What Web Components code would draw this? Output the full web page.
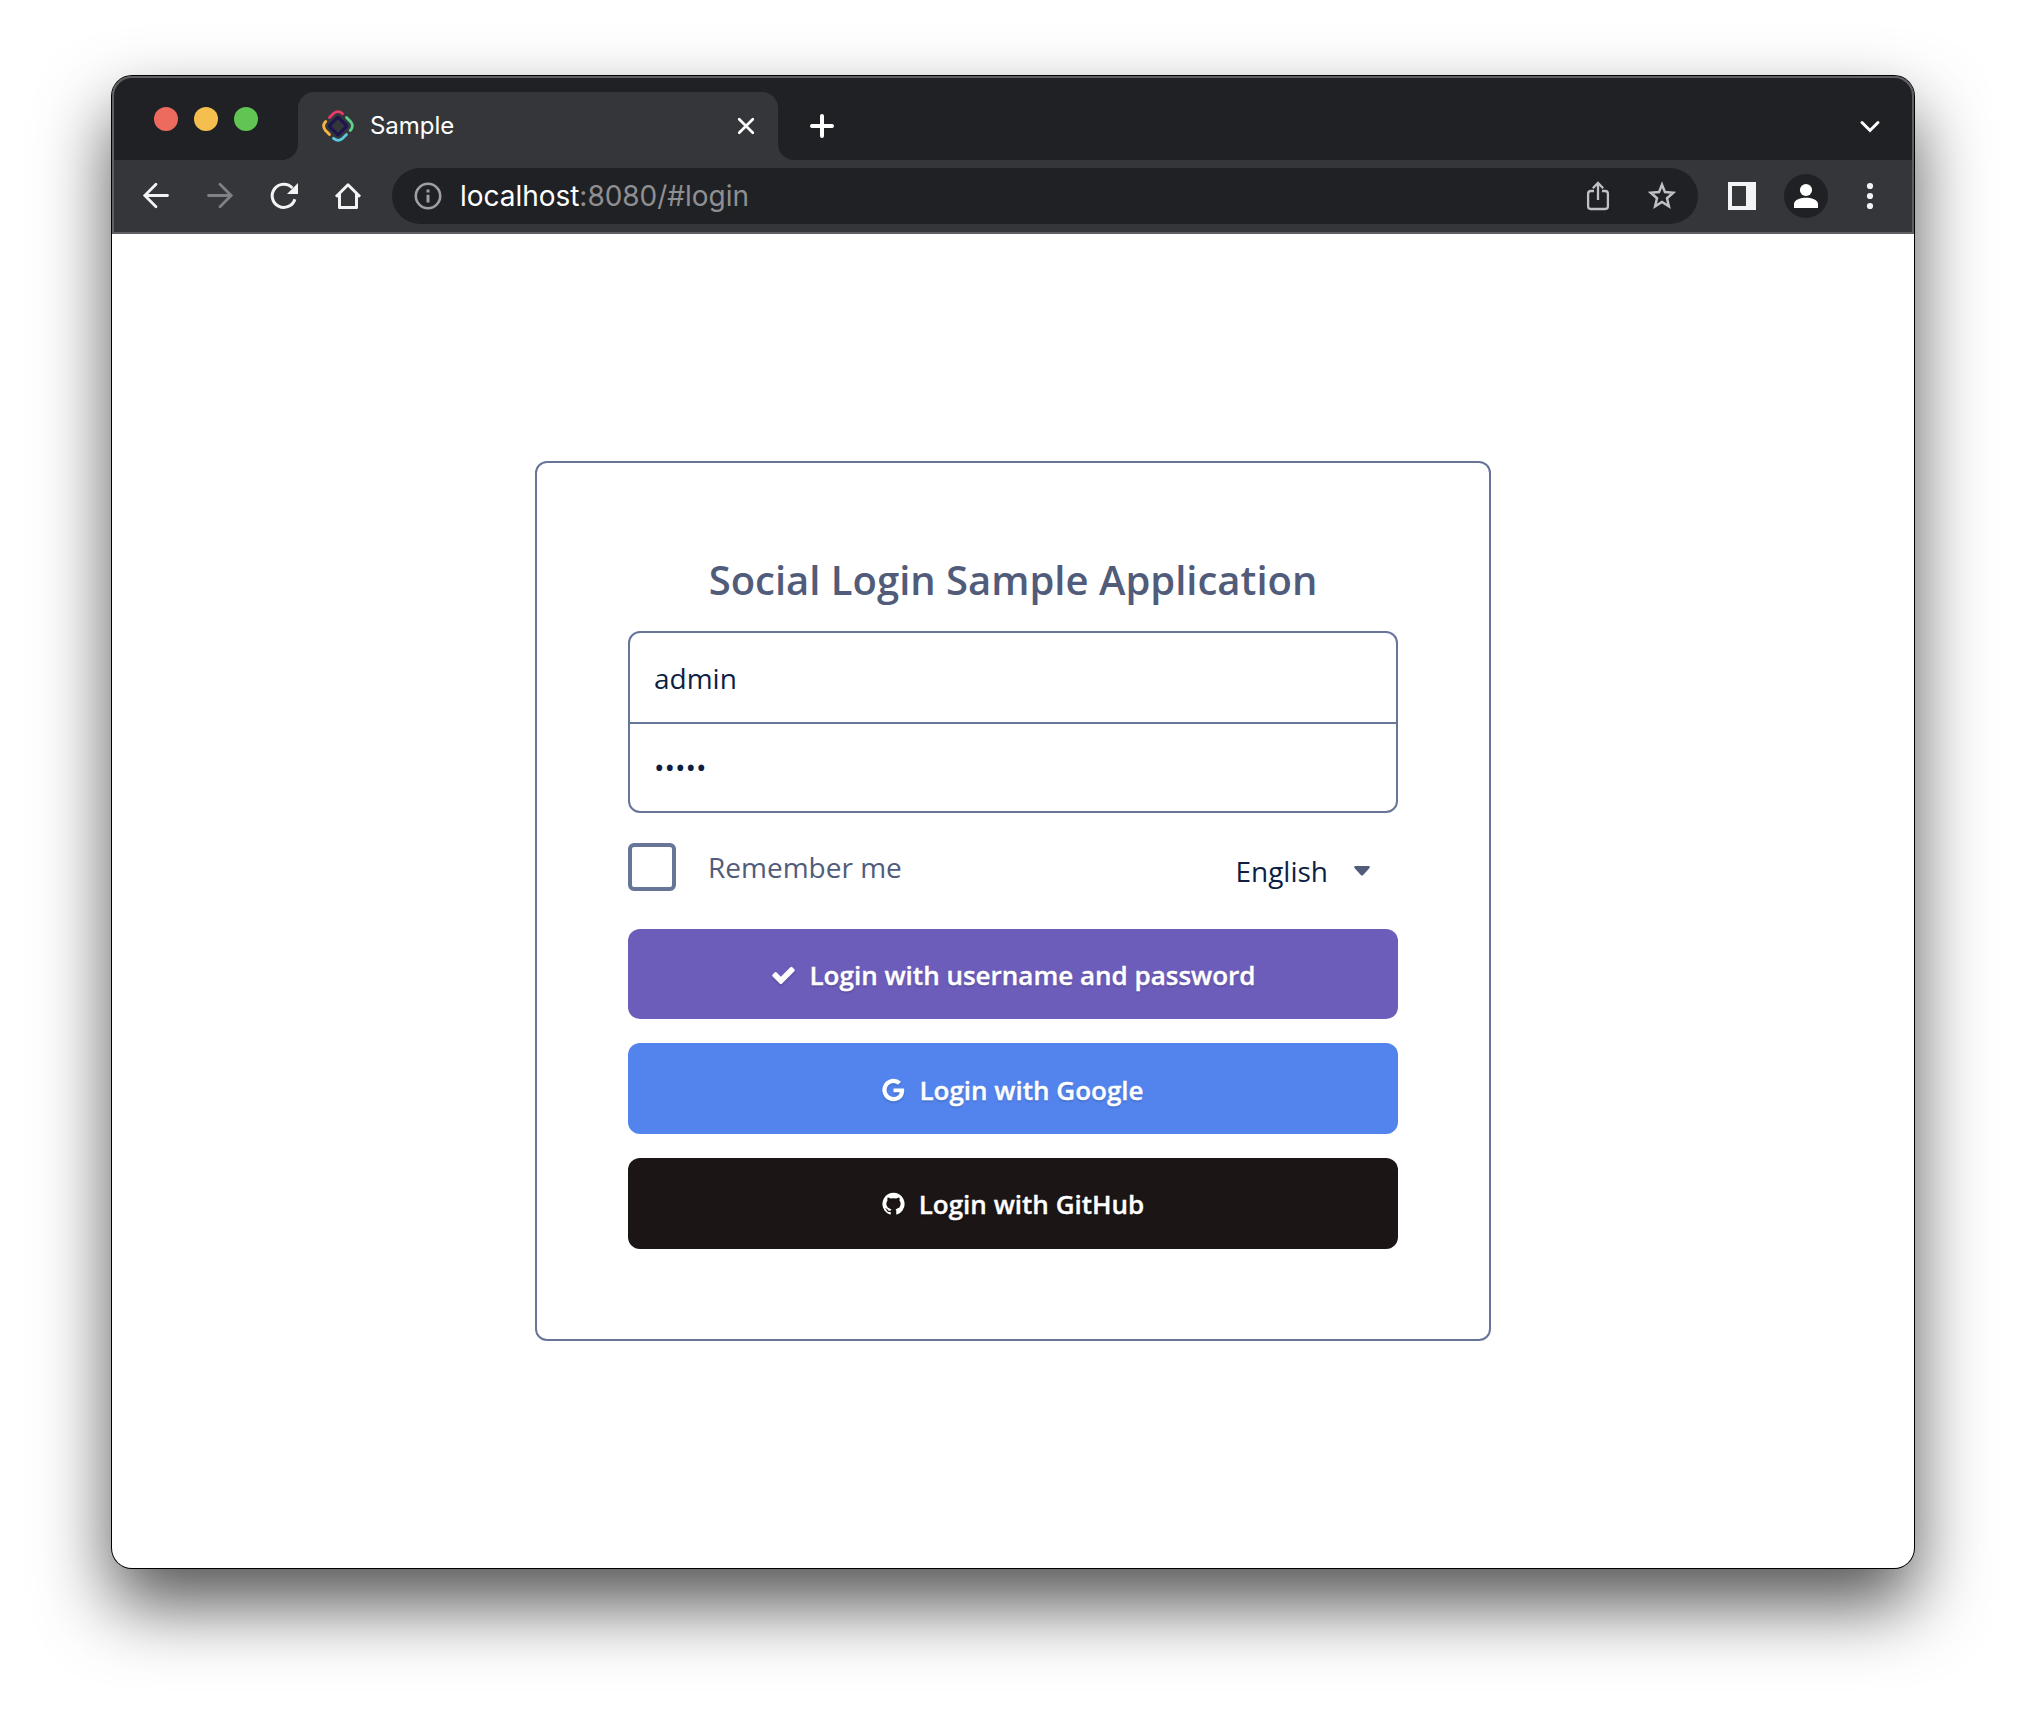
<!DOCTYPE html>
<html lang="en">
<head>
<meta charset="utf-8">
<title>Sample</title>
<style>
  html, body { margin: 0; background: #fff; }
  body { font-family: "Open Sans", sans-serif; height: 1716px; overflow: hidden; }
</style>
</head>
<body>
<app-window>
  <tab-strip slot="chrome">Sample</tab-strip>
  <tool-bar slot="chrome"><span>localhost</span><span slot="path">:8080/#login</span></tool-bar>
  <login-card heading="Social Login Sample Application">
    <field-group>
      <span slot="user">admin</span>
      <span slot="password">•••••</span>
    </field-group>
    <options-row><span slot="remember">Remember me</span><span slot="language">English</span></options-row>
    <login-button icon="check" style="--bg:#6d5dba;--h:90px;--pad:2px 0 0 2px">Login with username and password</login-button>
    <login-button icon="google" style="--bg:#5384ed;--h:91px;--pad:2px 0 0">Login with Google</login-button>
    <login-button icon="github" style="--bg:#1b1515;--h:91px;--pad:0">Login with GitHub</login-button>
  </login-card>
</app-window>
<script>
function define(name, html, setup) {
  customElements.define(name, class extends HTMLElement {
    connectedCallback() {
      if (this.shadowRoot) return;
      const root = this.attachShadow({ mode: 'open' });
      root.innerHTML = '<style>:host,*{box-sizing:border-box}svg{display:block;flex:none;overflow:visible}</style>' + html;
      if (setup) setup(this, root);
    }
  });
}

define('app-window', `
<style>
  :host { display: block; padding: 76px 112px 148px; }
  .frame { width: 1802px; height: 1492px; border-radius: 20px; background: #fff;
    box-shadow: 0 0 0 1px #000, 0 36px 72px rgba(0,0,0,.68); }
  .clip { width: 100%; height: 100%; border-radius: 20px; overflow: hidden; display: flex; flex-direction: column; }
  .chrome { height: 158px; flex: none; position: relative; }
  .edge { position: absolute; inset: 0; border: 2px solid #5f6064; border-radius: 20px 20px 0 0; }
  main { flex: 1; display: flex; justify-content: center; align-items: flex-start; padding-top: 227px; }
</style>
<div class="frame"><div class="clip">
  <div class="chrome"><slot name="chrome"></slot><div class="edge"></div></div>
  <main><slot></slot></main>
</div></div>`);

define('tab-strip', `
<style>
  :host { display: flex; height: 84px; background: #202124; padding: 16px 36px 0 42px; align-items: flex-start; }
  .lights { display: flex; gap: 16px; padding-top: 15px; width: 144px; flex: none; }
  .lights i { width: 24px; height: 24px; border-radius: 50%; }
  .tab { display: flex; align-items: center; width: 480px; height: 68px; background: #35363a; border-radius: 16px 16px 0 0;
    padding: 0 24px; }
  .tab .name { font: 400 24px/28px Inter, sans-serif; letter-spacing: -.05px; color: #fff; margin-left: 16px; flex: 1; }
  .foot { align-self: flex-end; flex: none; }
  .foot.left { margin-left: -16px; }
  .plus { margin: 22px 0 0 16px; }
  .chev { margin: 29px 0 0 auto; }
</style>
<div class="lights"><i style="background:#ed6a5e"></i><i style="background:#f5bf4f"></i><i style="background:#61c554"></i></div>
<svg class="foot left" width="16" height="16"><path d="M16 0V16H0A16 16 0 0 0 16 0Z" fill="#35363a"/></svg>
<div class="tab">
  <svg width="32" height="32" viewBox="0 0 32 32" fill="none" stroke-width="2.8" stroke-linecap="round">
    <path d="M7.500 7.500 12 3.100Q16 .2 19.800 3.100L20.500 3.800" stroke="#e83b69"/>
    <path d="M24.500 7.500 28.900 12Q31.800 16 28.900 19.800L28.200 20.500" stroke="#5dd28b"/>
    <path d="M24.500 24.500 20 28.900Q16 31.800 12.200 28.900L11.500 28.200" stroke="#5ac8e2"/>
    <path d="M7.500 24.500 3.100 20Q.2 16 3.100 12.200L3.800 11.500" stroke="#f4b544"/>
    <rect x="9.700" y="9.700" width="12.600" height="12.600" rx=".8" transform="rotate(45 16 16)" stroke="#1c154f" stroke-width="3.200"/>
  </svg>
  <span class="name"><slot></slot></span>
  <svg width="16" height="16" viewBox="0 0 16 16" stroke="#fff" stroke-width="2.700" stroke-linecap="round"><path d="M1.200 1.200 14.800 14.800M14.800 1.200 1.200 14.800"/></svg>
</div>
<svg class="foot" width="16" height="16"><path d="M0 0V16H16A16 16 0 0 1 0 0Z" fill="#35363a"/></svg>
<svg class="plus" width="24" height="24" viewBox="0 0 24 24" stroke="#fff" stroke-width="4" stroke-linecap="round"><path d="M2 12H22M12 2V22"/></svg>
<svg class="chev" width="16" height="12" viewBox="0 0 16 12" fill="none" stroke="#fff" stroke-width="3" stroke-linecap="round"><path d="M0 1.500 8 9.500 16 1.500"/></svg>
`);

define('tool-bar', `
<style>
  :host { display: flex; align-items: center; height: 74px; background: #35363a; padding: 0 41px 2px 31px; }
  .nav { display: flex; gap: 38px; width: 249px; flex: none; }
  .url { display: flex; align-items: center; width: 1306px; height: 56px; border-radius: 28px; background: #202124; padding: 0 21px 0 22px;
    font: 400 28px/34px Inter, sans-serif; color: #fff; flex: none; }
  .text { flex: 1; margin-left: 18px; white-space: nowrap; letter-spacing: -.03px; }
  .path { color: #8e8f92; }
  .share { margin-right: 38px; }
  .panel { margin-left: 30px; }
  .me { margin-left: 28px; }
  .dots { margin-left: auto; }
</style>
<div class="nav">
  <svg width="26" height="28" viewBox="0 0 26 28" fill="none" stroke="#f1f3f4" stroke-width="2.800" stroke-linecap="round"><path d="M24.500 13.500H2M13 2.200 1.800 13.500 13 24.800"/></svg>
  <svg width="26" height="28" viewBox="0 0 26 28" fill="none" stroke="#808184" stroke-width="2.800" stroke-linecap="round"><path d="M1.500 13.500H24M13 2.200 24.200 13.500 13 24.800"/></svg>
  <svg width="26" height="28" viewBox="0 0 26 28" fill="none"><path d="M23.900 17.200A11.600 11.600 0 1 1 21.400 6" stroke="#f1f3f4" stroke-width="3"/><path d="M27 1V12H16Z" fill="#f1f3f4"/></svg>
  <svg width="26" height="28" viewBox="0 0 26 28" fill="none" stroke="#f1f3f4" stroke-width="3"><path d="M1 14.800 13 2.800 25 14.800M4.500 12V25.500H21.500V12" stroke-linejoin="round"/></svg>
</div>
<div class="url">
  <svg width="28" height="28" viewBox="0 0 28 28" fill="none"><circle cx="14" cy="14" r="12.200" stroke="#9aa0a6" stroke-width="2.600"/><path d="M14 12.700V20.600M14 7.500V10.500" stroke="#9aa0a6" stroke-width="3"/></svg>
  <span class="text"><slot></slot><span class="path"><slot name="path"></slot></span></span>
  <svg class="share" width="22" height="30" viewBox="0 0 22 30" fill="none" stroke="#c0c1c4" stroke-width="2.300"><path d="M7 10H3.800Q1.100 10 1.100 12.700V25.300Q1.100 28 3.800 28H18.200Q20.900 28 20.900 25.300V12.700Q20.900 10 18.200 10H15M11 19V2.500M5.800 7.200 11 2 16.200 7.200"/></svg>
  <svg width="30" height="30" viewBox="0 0 30 30" fill="none" stroke="#c0c1c4" stroke-width="2.500"><path d="M15 3.700 18 11.100 26.200 11.800 20 17.200 21.900 25.300 15 21 8.100 25.300 10 17.200 3.800 11.800 12 11.100Z"/></svg>
</div>
<svg class="panel" width="28" height="28" viewBox="0 0 28 28"><path fill="#f1f3f4" fill-rule="evenodd" d="M0 0H28V28H0ZM4 4V24H18V4Z"/></svg>
<svg class="me" width="44" height="44" viewBox="0 0 44 44"><circle cx="22" cy="22" r="22" fill="#202124"/><circle cx="22" cy="16" r="6.100" fill="#fff"/><path d="M10 34V30C10 25.500 17 23.700 22 23.700S34 25.500 34 30V34Z" fill="#fff"/></svg>
<svg class="dots" width="6" height="28" viewBox="0 0 6 28" fill="#f1f3f4"><circle cx="3" cy="4" r="3.100"/><circle cx="3" cy="14" r="3.100"/><circle cx="3" cy="24" r="3.100"/></svg>
`);

define('login-card', `
<style>
  :host { display: flex; flex-direction: column; width: 956px; height: 880px; border: 2px solid #677599; border-radius: 12px;
    padding: 90px 91px 0; }
  h1 { margin: 0 0 24px; font-weight: 600; font-size: 40px; line-height: 54px; color: #515c7a; text-align: center; white-space: nowrap; }
</style>
<h1></h1><slot></slot>`, (el, root) => { root.querySelector('h1').textContent = el.getAttribute('heading'); });

define('field-group', `
<style>
  :host { display: flex; flex-direction: column; height: 182px; border: 2px solid #677599; border-radius: 12px;
    font-size: 28px; line-height: 38px; color: #0d1f45; }
  div { display: flex; align-items: center; padding: 0 24px; }
  .u { height: 91px; border-bottom: 2px solid #677599; }
  .p { height: 87px; padding-bottom: 2px; }
</style>
<div class="u"><slot name="user"></slot></div><div class="p"><slot name="password"></slot></div>`);

define('options-row', `
<style>
  :host { display: flex; align-items: flex-start; margin-top: 30px; height: 86px; font-size: 28px; line-height: 48px; color: #515c7a; }
  .box { width: 48px; height: 48px; border: 4px solid #677599; border-radius: 6px; margin-right: 32px; }
  .lang { display: flex; align-items: center; margin: 4px 28px 0 auto; gap: 26px; color: #0d1f45; }
</style>
<div class="box"></div><slot name="remember"></slot>
<div class="lang"><slot name="language"></slot>
<svg width="16" height="10" viewBox="0 0 16 10"><path d="M1 0H15Q16.500 .5 15.500 2L9.200 9Q8 10 6.800 9L.5 2Q-.5 .5 1 0Z" fill="#515c7a"/></svg></div>`);

const icons = {
  check: 'M1671 566q0 40-28 68l-724 724-136 136q-28 28-68 28t-68-28l-136-136-362-362q-28-28-28-68t28-68l136-136q28-28 68-28t68 28l294 295 656-657q28-28 68-28t68 28l136 136q28 28 28 68z',
  google: 'M896 786h725q12 67 12 128 0 217-91 387.5t-259.5 266.5-386.5 96q-157 0-299-60.5t-245-163.5-163.5-245-60.5-299 60.5-299 163.5-245 245-163.5 299-60.5q300 0 515 201l-209 201q-123-119-306-119-129 0-238.5 65t-173.5 176.5-64 243.500 64 243.500 173.500 176.500 238.500 65q87 0 160-24t120-60 82-82 51.500-87 22.500-78h-436v-264z',
  github: 'M896 128q209 0 385.500 103t279.500 279.500 103 385.500q0 251-146.500 451.500t-378.500 277.500q-27 5-40-7t-13-30q0-3 .5-76.500t.5-134.500q0-97-52-142 57-6 102.500-18t94-39 81-66.500 53-105 20.500-150.500q0-119-79-206 37-91-8-204-28-9-81 11t-92 44l-38 24q-93-26-192-26t-192 26q-16-11-42.500-27t-83.500-38.500-85-13.500q-45 113-8 204-79 87-79 206 0 85 20.500 150t52.500 105 80.500 67 94 39 102.500 18q-39 36-49 103-21 10-45 15t-57 5-65.500-21.500-55.500-62.500q-19-32-48.500-52t-49.500-24l-20-3q-21 0-29 4.500t-5 11.500 9 14 13 12l7 5q22 10 43.500 38t31.500 51l10 23q13 38 44 61.500t67 30 69.500 7 55.500-3.500l23-4q0 38 .5 88.500t.5 54.500q0 18-13 30t-40 7q-232-77-378.500-277.500t-146.500-451.500q0-209 103-385.500t279.500-279.500 385.500-103z'
};
const boxes = { check: '121 0 1550 1792', google: '128 0 1536 1792', github: '128 0 1536 1792' };

define('login-button', `
<style>
  :host { display: flex; justify-content: center; align-items: center; height: var(--h); background: var(--bg); border-radius: 12px;
    margin-bottom: 24px; flex: none; padding: var(--pad); color: #fff; font-weight: 600; font-size: 26px; line-height: 36px;
    text-shadow: 0 2px 2px rgba(0,0,0,.15); -webkit-text-stroke: .35px #fff; white-space: nowrap; }
  svg { margin-right: 14px; filter: drop-shadow(0 2px 1px rgba(0,0,0,.12)); }
</style>
<svg fill="#fff" width="23" height="26"><path/></svg><slot></slot>`, (el, root) => {
  const k = el.getAttribute('icon'), svg = root.querySelector('svg');
  svg.setAttribute('viewBox', boxes[k]);
  svg.firstChild.setAttribute('d', icons[k]);
});
</script>
</body>
</html>
